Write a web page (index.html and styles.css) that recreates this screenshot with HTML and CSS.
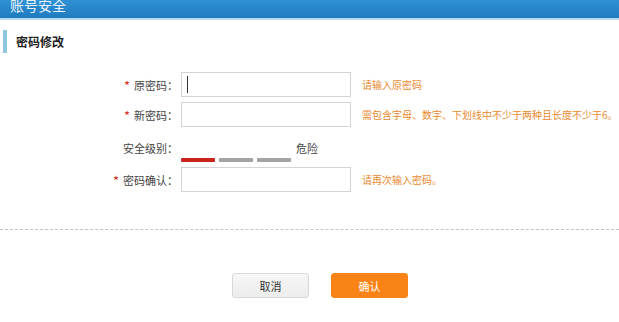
FILE: index.html
```html
<!DOCTYPE html>
<html lang="zh-CN">
<head>
<meta charset="utf-8">
<title>账号安全</title>
<link rel="stylesheet" href="styles.css">
</head>
<body>
<div class="topbar"><span class="topbar-title">账号安全</span></div>
<div class="section-title">密码修改</div>
<div class="form">
  <div class="row">
    <label class="label"><span class="req">*</span>原密码：</label>
    <div class="input focused"><span class="caret"></span></div>
    <span class="hint">请输入原密码</span>
  </div>
  <div class="row">
    <label class="label"><span class="req">*</span>新密码：</label>
    <div class="input"></div>
    <span class="hint">需包含字母、数字、下划线中不少于两种且长度不少于6。</span>
  </div>
  <div class="row level-row">
    <span class="label level-label">安全级别：</span>
    <div class="level">
      <div class="level-text">危险</div>
      <div class="bars">
        <span class="bar bar-on"></span>
        <span class="bar"></span>
        <span class="bar"></span>
      </div>
    </div>
  </div>
  <div class="row">
    <label class="label"><span class="req">*</span>密码确认：</label>
    <div class="input"></div>
    <span class="hint">请再次输入密码。</span>
  </div>
</div>
<div class="divider"></div>
<div class="actions">
  <button class="btn btn-cancel">取消</button>
  <button class="btn btn-ok">确认</button>
</div>
</body>
</html>
```
FILE: styles.css
```css
* { box-sizing: border-box; }
html, body { margin: 0; padding: 0; background: #fff; }
body {
  width: 619px;
  height: 322px;
  overflow: hidden;
  font-family: "Noto Sans CJK SC", "Noto Sans", sans-serif;
  color: #333;
}
.topbar {
  height: 20px;
  background: linear-gradient(#2f91d3, #1f7bbf);
  border-bottom: 2px solid #b7dcf2;
  overflow: hidden;
  padding-left: 10px;
}
.topbar-title {
  display: block;
  color: #e8f3fb;
  font-size: 14px;
  line-height: 14px;
  margin-top: -2px;
}
.section-title {
  margin: 10px 0 0 3px;
  height: 23px;
  border-left: 4px solid #8ec7e2;
  padding-left: 9px;
  font-size: 12px;
  font-weight: bold;
  line-height: 23px;
  color: #222;
}
.form {
  margin-top: 19px;
}
.row {
  display: flex;
  align-items: center;
  height: 25px;
  margin-bottom: 5px;
}
.label {
  width: 178px;
  text-align: right;
  font-size: 11px;
  color: #444;
  margin-right: 3px;
  display: flex;
  align-items: center;
  justify-content: flex-end;
}
.req {
  color: #d8302a;
  font-size: 13px;
  line-height: 13px;
  margin-right: 4px;
  padding-top: 2px;
}
.input {
  width: 170px;
  height: 25px;
  border: 1px solid #d4d4d4;
  background: #fff;
  display: flex;
  align-items: center;
  padding-left: 5px;
}
.caret {
  width: 1px;
  height: 17px;
  background: #333;
}
.hint {
  margin-left: 11px;
  font-size: 10px;
  color: #e8892e;
  white-space: nowrap;
}
.level-row {
  height: 35px;
  margin-bottom: 0;
  align-items: flex-start;
}
.level-label {
  margin-top: 8px;
}
.level {
  width: 150px;
}
.level-text {
  font-size: 11px;
  color: #444;
  padding-left: 115px;
  line-height: 14px;
  margin-top: 9px;
}
.bars {
  display: flex;
  gap: 4px;
  margin-top: 3px;
}
.bar {
  width: 34px;
  height: 4px;
  background: #a3a3a3;
  border-radius: 1px;
}
.bar-on {
  background: #c8231d;
}
.divider {
  margin-top: 37px;
  border-top: 1px dashed #c4c4c4;
}
.actions {
  display: flex;
  gap: 22px;
  margin-top: 43px;
  padding-left: 232px;
}
.btn {
  width: 77px;
  height: 25px;
  border-radius: 3px;
  font-family: inherit;
  font-size: 11px;
  padding: 0;
  cursor: pointer;
}
.btn-cancel {
  background: linear-gradient(#f7f7f7, #ececec);
  border: 1px solid #d8d8d8;
  color: #333;
}
.btn-ok {
  background: #f98316;
  border: 1px solid #f98316;
  color: #fff;
}
```
